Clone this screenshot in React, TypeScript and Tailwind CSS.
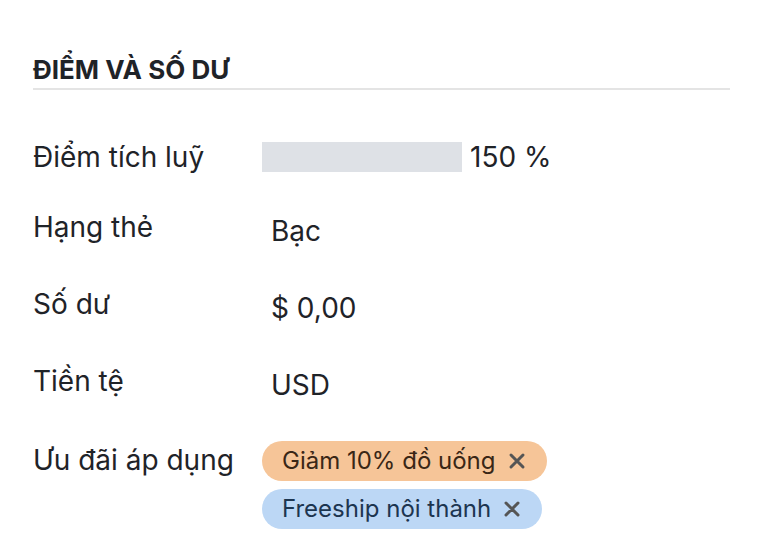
const tags = [
	{ label: "Giảm 10% đồ uống", cls: "bg-[#f6c598] text-[#3a2716]" },
	{ label: "Freeship nội thành", cls: "bg-[#bcd7f5] text-[#1c3550]" },
];

const rows: { label: string; value: string }[] = [
	{ label: "Hạng thẻ", value: "Bạc" },
	{ label: "Số dư", value: "$ 0,00" },
	{ label: "Tiền tệ", value: "USD" },
];

const X = () => (
	<svg width="18" height="18" viewBox="0 0 18 18" className="shrink-0">
		<path
			d="M3 3 L15 15 M15 3 L3 15"
			stroke="#555"
			strokeWidth="3"
			strokeLinecap="round"
		/>
	</svg>
);

export default function App() {
	return (
		<div className="w-[762px] h-[536px] bg-white text-[#1f2328] font-['Inter',sans-serif] px-[33px] pt-[54px]">
			<div className="text-[26px] leading-[32px] font-bold pb-[2px] border-b-2 border-[#e4e4e4] w-[697px]">
				ĐIỂM VÀ SỐ DƯ
			</div>

			<div className="mt-[52px] text-[28px] leading-[34px]">
				<div className="flex items-center h-[30px]">
					<div className="w-[229px]">Điểm tích luỹ</div>
					<div className="w-[200px] h-[30px] bg-[#dee1e6]" />
					<div className="ml-[8px]">150 %</div>
				</div>

				<div className="mt-[38px]">
					{rows.map((r, i) => (
						<div
							key={r.label}
							className={`flex h-[34px] ${i > 0 ? "mt-[43px]" : ""}`}
						>
							<div className="w-[229px]">{r.label}</div>
							<div className="pl-[9px] pt-[4px]">{r.value}</div>
						</div>
					))}
				</div>

				<div className="flex mt-[43px]">
					<div className="w-[229px] pt-[2px]">Ưu đãi áp dụng</div>
					<div className="flex flex-col items-start gap-[8px]">
						{tags.map((t) => (
							<div
								key={t.label}
								className={`flex items-center gap-[12px] h-[40px] pl-[20px] pr-[21px] rounded-full text-[24px] leading-[30px] ${t.cls}`}
							>
								<span>{t.label}</span>
								<X />
							</div>
						))}
					</div>
				</div>
			</div>
		</div>
	);
}
